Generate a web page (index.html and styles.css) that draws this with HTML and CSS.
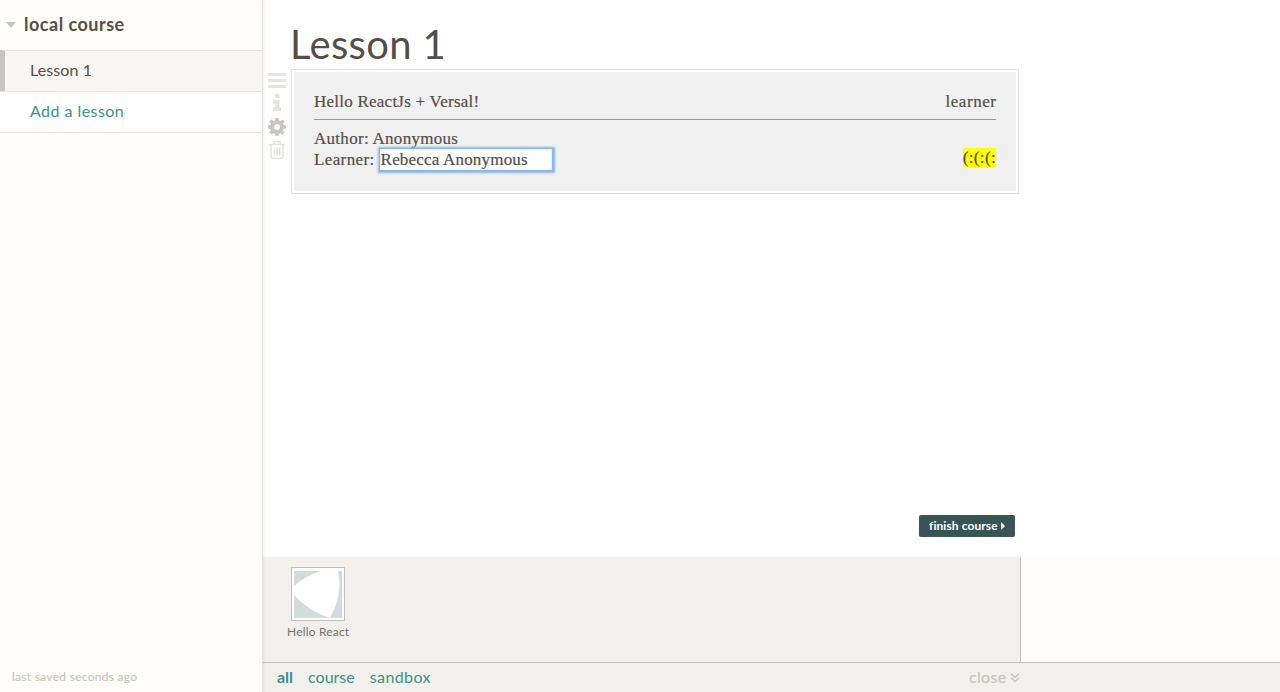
FILE: index.html
```html
<!DOCTYPE html>
<html lang="en">
<head>
<meta charset="utf-8">
<title>local course</title>
<link rel="stylesheet" href="styles.css">
</head>
<body>
<div class="app">
  <aside class="sidebar">
    <header class="course"><span class="caret"></span><span class="course-name">local course</span></header>
    <nav class="lessons">
      <a class="lesson active"><span class="t-lesson">Lesson 1</span></a>
      <a class="lesson add"><span class="t-add">Add a lesson</span></a>
    </nav>
    <footer class="saved"><span class="t-saved">last saved seconds ago</span></footer>
  </aside>
  <main class="main">
    <section class="stage">
      <h1 class="title"><span class="t-title">Lesson 1</span></h1>
      <div class="gadget-row">
        <div class="tools">
          <svg class="tool" width="18" height="15" viewBox="0 0 18 15"><path fill="#e5e4e0" d="M0 0h18v3H0zM0 6h18v3H0zM0 12h18v3H0z"/></svg>
          <svg class="tool info" width="18" height="17" viewBox="0 0 18 17"><path fill="#e5e4e0" d="M6.500.7Q6.500 0 7.200 0h3.600q.7 0 .7.700v2.600q0 .7-.7.7H7.200q-.7 0-.7-.7zM5 6h6.500v7.500H13V17H5v-3.500h2v-4H5z"/></svg>
          <svg class="tool gear" width="18" height="18" viewBox="0 0 18 18"><path fill="#c8c4bf" fill-rule="evenodd" d="M7.500 0h3l.5 2.500 1.400.6L14.600 1.600l2 2-1.500 2.200.6 1.500 2.300.3v3l-2.400.5-.6 1.400 1.500 2.200-2 2-2.200-1.500-1.400.6-.4 2.200h-3L7 15.600l-1.400-.6-2.200 1.500-2-2L2.900 12.400 2.300 11 0 10.500v-3L2.300 7l.6-1.400L1.400 3.500l2-2L5.600 3 7 2.400zM9 6.100a2.900 2.900 0 1 0 0 5.800 2.900 2.900 0 0 0 0-5.800z"/></svg>
          <svg class="tool trash" width="18" height="18" viewBox="0 0 18 18"><path fill="none" stroke="#e5e4e0" stroke-width="1.500" d="M1 3.500h16M6 3V.8h6V3M3 4v11.500q0 1.700 1.700 1.700h8.600q1.700 0 1.700-1.700V4M6.500 6.500v8M9 6.500v8M11.500 6.500v8"/></svg>
        </div>
        <article class="gadget">
          <div class="gadget-body">
            <div class="line head"><span class="t-hello">Hello ReactJs + Versal!</span><span class="t-learner">learner</span></div>
            <div class="rule"></div>
            <div class="info-row">
              <div class="people">
                <div class="line"><span class="t-author">Author: Anonymous</span></div>
                <div class="line"><span class="t-label">Learner:</span><div class="field"><span class="t-name">Rebecca Anonymous</span></div></div>
              </div>
              <span class="smile"><span class="t-smile">(:(:(:</span></span>
            </div>
          </div>
        </article>
      </div>
      <a class="finish"><span class="t-finish">finish course</span><span class="arrow"></span></a>
    </section>
    <section class="tray">
      <div class="tray-items">
        <figure class="item">
          <svg class="thumb" width="54" height="54" viewBox="0 0 54 54"><path fill="#c2bfba" d="M0 0h54v54H0z"/><path fill="#fff" d="M1 1h52v52H1z"/><path fill="#d2dcdd" d="M3 4h48v47H3z"/><path fill="#fff" d="M3 19Q14 9 30 4h17q5 24-8 47Q17 44 3 28z"/></svg>
          <figcaption class="caption"><span class="t-caption">Hello React</span></figcaption>
        </figure>
      </div>
    </section>
    <footer class="filters">
      <a class="filter all"><span class="t-all">all</span></a>
      <a class="filter crs"><span class="t-course">course</span></a>
      <a class="filter"><span class="t-sandbox">sandbox</span></a>
      <a class="close"><span class="t-close">close</span><svg class="chevrons" width="10" height="10" viewBox="0 0 10 10"><path fill="none" stroke="#c8c5c0" stroke-width="1.400" d="M1 .8l4 3.700L9 .8M1 4.800l4 3.700 4-3.700"/></svg></a>
    </footer>
  </main>
</div>
</body>
</html>
```
FILE: styles.css
```css
* { box-sizing: border-box; }
body { margin: 0; color: #544e46; font-family: Lato, sans-serif; background: #fff; }
.app { display: flex; width: 1280px; height: 692px; overflow: hidden; white-space: nowrap; }
.sidebar { width: 263px; display: flex; flex-direction: column; background: #fffdf9; border-right: 1px solid #e6e5e3; box-shadow: 0 0 3px rgba(0,0,0,.12); position: relative; z-index: 1; }
.course { height: 50px; display: flex; align-items: center; padding-left: 6px; gap: 8px; font-size: 18px; font-weight: 700; }
.course-name { letter-spacing: .5px; padding-bottom: 2px; }
.caret { border: 5px solid transparent; border-top: 6px solid #c8c4bf; border-bottom: 0; }
.lessons { border-bottom: 1px solid #e6e5e3; }
.lesson { display: flex; align-items: center; height: 41px; border-top: 1px solid #e6e5e3; padding: 0 0 3px 30px; font-size: 16px; background: #fff; }
.active { background: #f7f6f3; border-left: 5px solid #c8c4bf; padding-left: 25px; }
.t-lesson { letter-spacing: .1px; }
.add { color: #3c9284; }
.t-add { letter-spacing: .45px; }
.saved { margin-top: auto; height: 31px; line-height: 31px; padding-left: 12px; font-size: 12px; color: #c8c5c0; -webkit-text-stroke: .15px; letter-spacing: .28px; }
.main { flex: 1; display: flex; flex-direction: column; background: #fffdf9; }
.stage { height: 557px; background: #fff; display: flex; flex-direction: column; }
.title { margin: 0; height: 69px; padding: 20px 0 0 27px; font-size: 40px; line-height: 49px; font-weight: 400; letter-spacing: .35px; }
.gadget-row { display: flex; height: 125px; }
.tools { width: 28px; padding: 4px 0 0 5px; display: flex; flex-direction: column; }
.tool { display: block; flex: none; }
.info { margin-top: 6px; }
.gear { margin-top: 7px; }
.trash { margin-top: 5px; }
.gadget { width: 728px; border: 1px solid #e2e2e2; padding: 2px; }
.gadget-body { height: 100%; background: #f0f0f0; padding: 19px 20px; font-family: "Liberation Serif", serif; font-size: 17px; -webkit-text-stroke: .2px; }
.line { display: flex; height: 21px; line-height: 21px; }
.head { justify-content: space-between; }
.t-hello { letter-spacing: .24px; }
.t-learner { letter-spacing: .55px; margin-right: -.5px; }
.t-author { letter-spacing: .29px; }
.t-label { letter-spacing: .38px; }
.t-name { letter-spacing: .19px; }
.rule { height: 1px; background: #999; margin: 7px 0 8px; }
.info-row { display: flex; justify-content: space-between; }
.field { margin: -1px 0 0 4px; width: 174px; height: 23px; line-height: 22px; padding-left: 1px; background: #fff; border: 1px solid #8ab6e0; box-shadow: 0 0 2px 1.500px #8ab6e0, inset 0 0 2px #b9d1e8; }
.smile { margin-top: 20px; height: 19px; line-height: 19px; background: #ff0; letter-spacing: .35px; }
.finish { margin: auto 0 20px 656px; width: 96px; height: 22px; border-radius: 2px; background: #395455; color: #fff; display: flex; align-items: center; padding: 0 0 1px 10px; gap: 3px; font-size: 12px; font-weight: 700; }
.t-finish { letter-spacing: .08px; }
.arrow { border: 4px solid transparent; border-left-color: #fff; border-right: 0; }
.tray { width: 758px; height: 105px; background: #f2f0ed; border-right: 1px solid #c4c1bc; }
.tray-items { padding: 10px 0 0 24px; }
.item { margin: 0; width: 64px; }
.thumb { display: block; margin-left: 4px; }
.caption { font-size: 12px; line-height: 15px; margin-top: 3px; color: #77726c; letter-spacing: .18px; }
.filters { flex: 1; border-top: 1px solid #c4c1bc; background: #f2f0ed; display: flex; align-items: center; padding: 0 0 2px 14px; font-size: 16px; color: #3c9284; }
.filter { margin-right: 15px; }
.t-sandbox { letter-spacing: .4px; }
.all { font-weight: 700; }
.close { margin-left: 523px; color: #c8c5c0; display: flex; align-items: center; gap: 3px; -webkit-text-stroke: .15px; }
.t-close { letter-spacing: .35px; }
.chevrons { margin-top: 2px; }
```
